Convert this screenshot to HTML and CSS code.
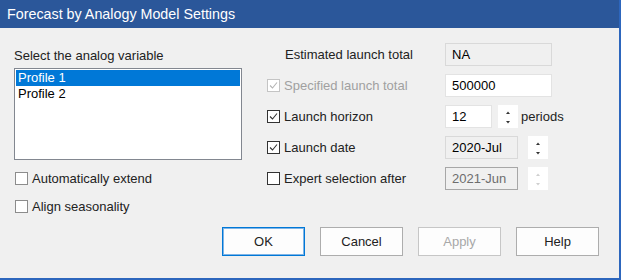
FILE: index.html
```html
<!DOCTYPE html>
<html lang="en">
<head>
    <meta charset="UTF-8">
    <title>Forecast by Analogy Model Settings</title>
    <link rel="stylesheet" href="styles.css">
</head>
<body>

<div class="dialog">
    <div class="titlebar">Forecast by Analogy Model Settings</div>
    <div class="content">
        <div class="columns">
            <div class="left">
                <div class="caption">Select the analog variable</div>
                <div class="listbox">
                    <div class="list-item selected">Profile 1</div>
                    <div class="list-item">Profile 2</div>
                </div>
                <div class="check first">
                    <span class="box"></span><span>Automatically extend</span>
                </div>
                <div class="check second">
                    <span class="box"></span><span>Align seasonality</span>
                </div>
            </div>

            <div class="right">
                <div class="row">
                    <div class="label plain">Estimated launch total</div>
                    <div class="field wide readonly">NA</div>
                </div>
                <div class="row">
                    <div class="label disabled">
                        <span class="box checked">
                            <svg width="11" height="11" viewBox="0 0 11 11"><polyline points="2,5.5 4.5,8 9,2.5" fill="none" stroke="#b4b4b4" stroke-width="1.1"/></svg>
                        </span>
                        <span>Specified launch total</span>
                    </div>
                    <div class="field wide">500000</div>
                </div>
                <div class="row">
                    <div class="label">
                        <span class="box checked">
                            <svg width="11" height="11" viewBox="0 0 11 11"><polyline points="2,5.5 4.5,8 9,2.5" fill="none" stroke="#333" stroke-width="1.1"/></svg>
                        </span>
                        <span>Launch horizon</span>
                    </div>
                    <div class="field short">12</div>
                    <div class="spin near">
                        <svg width="20" height="23" viewBox="0 0 20 23"><polygon points="8,9 10,6.5 12,9" fill="#333"/><polygon points="8,16 10,18.5 12,16" fill="#333"/></svg>
                    </div>
                    <span class="unit">periods</span>
                </div>
                <div class="row">
                    <div class="label">
                        <span class="box checked">
                            <svg width="11" height="11" viewBox="0 0 11 11"><polyline points="2,5.5 4.5,8 9,2.5" fill="none" stroke="#333" stroke-width="1.1"/></svg>
                        </span>
                        <span>Launch date</span>
                    </div>
                    <div class="field date readonly">2020-Jul</div>
                    <div class="spin">
                        <svg width="20" height="23" viewBox="0 0 20 23"><polygon points="8,9 10,6.5 12,9" fill="#333"/><polygon points="8,16 10,18.5 12,16" fill="#333"/></svg>
                    </div>
                </div>
                <div class="row">
                    <div class="label">
                        <span class="box"></span>
                        <span>Expert selection after</span>
                    </div>
                    <div class="field date locked">2021-Jun</div>
                    <div class="spin">
                        <svg width="20" height="23" viewBox="0 0 20 23"><polygon points="8,9 10,6.5 12,9" fill="#cfcfcf"/><polygon points="8,16 10,18.5 12,16" fill="#cfcfcf"/></svg>
                    </div>
                </div>
            </div>
        </div>

        <div class="buttons">
            <button class="default">OK</button>
            <button>Cancel</button>
            <button class="off">Apply</button>
            <button>Help</button>
        </div>
    </div>
</div>

</body>
</html>
```

FILE: styles.css
```css
body {
    margin: 0;
    font-family: "Liberation Sans", Arial, sans-serif;
    font-size: 13px;
    color: #222;
}
.dialog {
    width: 621px;
    height: 280px;
    box-sizing: border-box;
    background: #f0f0f0;
    border-right: 2px solid #2d66bd;
    border-bottom: 2px solid #2d66bd;
    overflow: hidden;
}
.titlebar {
    height: 28px;
    line-height: 28px;
    padding-left: 7px;
    background: #2b579a;
    color: #fff;
    font-size: 14.3px;
}
.columns {
    display: flex;
    height: 199px;
}
.left {
    width: 253px;
    padding-left: 14px;
}
.caption {
    margin-top: 20px;
    line-height: 16px;
}
.listbox {
    margin-top: 4px;
    width: 228px;
    height: 92px;
    box-sizing: border-box;
    border: 1px solid #828790;
    background: #fff;
    padding: 1px;
}
.list-item {
    height: 16px;
    line-height: 16px;
    padding-left: 2px;
    color: #000;
}
.list-item.selected {
    background: #0078d7;
    color: #fff;
}
.check {
    display: flex;
    align-items: center;
    gap: 4px;
    height: 16px;
    padding-left: 1px;
}
.check.first {
    margin-top: 10px;
}
.check.second {
    margin-top: 12px;
}
.box {
    width: 13px;
    height: 13px;
    box-sizing: border-box;
    border: 1px solid #333;
    background: #fff;
    display: inline-flex;
    align-items: center;
    justify-content: center;
    flex: none;
}
.check .box {
    border-color: #8c8c8c;
}
.right {
    padding-top: 15px;
    display: flex;
    flex-direction: column;
    gap: 8px;
}
.row {
    display: flex;
    align-items: center;
    height: 23px;
}
.label {
    width: 178px;
    display: flex;
    align-items: center;
    gap: 4px;
}
.label.plain {
    padding-left: 18px;
    box-sizing: border-box;
}
.label.disabled {
    color: #a0a0a0;
}
.label.disabled .box {
    border-color: #c4c4c4;
}
.field {
    height: 23px;
    box-sizing: border-box;
    border: 1px solid #7a7a7a;
    background: #fff;
    line-height: 21px;
    padding-left: 6px;
    color: #000;
}
.field.wide {
    width: 107px;
}
.field.short {
    width: 47px;
    border-color: #e3e3e3;
}
.field.date {
    width: 73px;
}
.field.readonly {
    background: #f0f0f0;
    border-color: #d9d9d9;
}
.field.locked {
    background: #f0f0f0;
    border-color: #a7a7a7;
    color: #6d6d6d;
}
.field.wide:not(.readonly) {
    border-color: #e3e3e3;
}
.spin {
    width: 20px;
    height: 23px;
    background: #fff;
    margin-left: 10px;
}
.spin.near {
    margin-left: 6px;
}
.unit {
    margin-left: 3px;
}
.buttons {
    display: flex;
    justify-content: flex-end;
    gap: 15px;
    padding-right: 20px;
}
button {
    width: 83px;
    height: 29px;
    font-family: "Liberation Sans", Arial, sans-serif;
    font-size: 13px;
    color: #222;
    background: #fdfdfd;
    border: 1px solid #adadad;
    padding: 0;
}
button.default {
    border-color: #0078d7;
    box-shadow: inset 0 0 0 1px #7fb4e6;
}
button.off {
    color: #a8a8a8;
    border-color: #c6c6c6;
}
```
